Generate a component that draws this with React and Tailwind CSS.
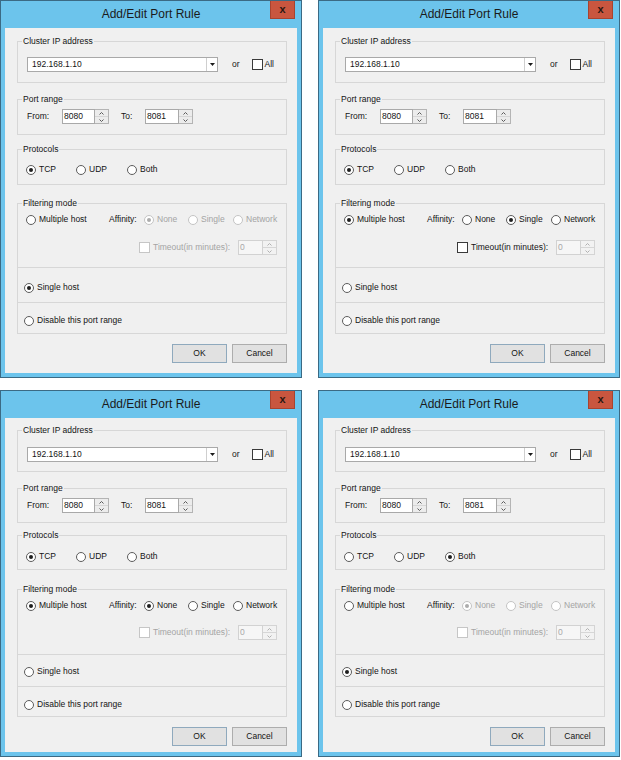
import React from "react";

const TXT = "text-[#141414]";
const DIS = "text-[#a4a4a4]";

function Radio({ label, checked, disabled, className = "" }) {
  return (
    <div className={`flex items-center h-[15px] ${className}`}>
      <span
        className={`w-[10px] h-[10px] shrink-0 rounded-full border bg-white flex items-center justify-center ${
          disabled ? "border-[#c4c4c4]" : "border-[#5c5c5c]"
        }`}
      >
        {checked && (
          <span className={`w-[4px] h-[4px] rounded-full ${disabled ? "bg-[#acacac]" : "bg-[#1e1e1e]"}`} />
        )}
      </span>
      <span className={`ml-[3px] whitespace-nowrap ${disabled ? DIS : TXT}`}>{label}</span>
    </div>
  );
}

function Check({ disabled }) {
  return (
    <span
      className={`w-[11px] h-[11px] shrink-0 border bg-white ${disabled ? "border-[#c6c6c6]" : "border-[#3a3a3a]"}`}
    />
  );
}

function Chevron({ up, disabled }) {
  return (
    <svg width="5" height="3" viewBox="0 0 5 3" className="block">
      <path
        d={up ? "M0.5 2.5 L2.5 0.5 L4.5 2.5" : "M0.5 0.5 L2.5 2.5 L4.5 0.5"}
        fill="none"
        stroke={disabled ? "#b0b0b0" : "#5a5a5a"}
        strokeWidth="1"
      />
    </svg>
  );
}

function Spinner({ value, disabled, w }) {
  return (
    <div className="flex h-[15px]">
      <div
        className={`${w} h-[15px] border pl-[1px] leading-[13px] ${
          disabled ? "border-[#d2d2d2] bg-[#f6f6f6] text-[#a8a8a8]" : "border-[#a9a9a9] bg-white text-[#141414]"
        }`}
      >
        {value}
      </div>
      <div
        className={`w-[14px] h-[15px] flex flex-col border border-l-0 ${
          disabled ? "border-[#d4d4d4] bg-[#f2f2f2]" : "border-[#b4b4b4] bg-[#ececec]"
        }`}
      >
        <div className="flex-1 flex items-center justify-center border-b border-[#d6d6d6]">
          <Chevron up disabled={disabled} />
        </div>
        <div className="flex-1 flex items-center justify-center">
          <Chevron disabled={disabled} />
        </div>
      </div>
    </div>
  );
}

const NORMAL = {
  pt: "pt-[8px]",
  f1h: "h-[47px]",
  f1mt: "mt-[11px]",
  f2mt: "mt-[11px]",
  f2h: "h-[41px]",
  f2rowmt: "mt-[5px]",
  f3mt: "mt-[9px]",
  f3h: "h-[41px]",
  f3rowmt: "mt-[8px]",
  f4mt: "mt-[13px]",
  f4h: "h-[70px]",
  f4rowmt: "mt-[4px]",
  timemt: "mt-[13px]",
  singleh: "h-[35px]",
  singlept: "pt-[12px]",
  dish: "h-[31px]",
  dispt: "pt-[10px]",
  pb: "pb-[10px]",
};

const COMPACT = {
  pt: "pt-[7px]",
  f1h: "h-[47px]",
  f1mt: "mt-[12px]",
  f2mt: "mt-[11px]",
  f2h: "h-[40px]",
  f2rowmt: "mt-[5px]",
  f3mt: "mt-[7px]",
  f3h: "h-[40px]",
  f3rowmt: "mt-[9px]",
  f4mt: "mt-[14px]",
  f4h: "h-[71px]",
  f4rowmt: "mt-[4px]",
  timemt: "mt-[12px]",
  singleh: "h-[32px]",
  singlept: "pt-[9px]",
  dish: "h-[30px]",
  dispt: "pt-[10px]",
  pb: "pb-[6px]",
};

const BOX = "border border-[#d7d7d7]";

function Dialog({ protocol, mode, affinity, timeoutEnabled, compact }) {
  const m = compact ? COMPACT : NORMAL;
  const multi = mode === "multiple";
  const affDisabled = !multi;
  return (
    <div className="w-[302px] border border-[#3b6a84] bg-[#6cc4ec] flex flex-col">
      <div className="h-[27px] grid grid-cols-[1fr_auto_1fr] items-start">
        <div />
        <div className="pt-[6px] text-[12px] leading-[14px] text-[#1b1b1b] whitespace-nowrap">Add/Edit Port Rule</div>
        <div className="flex justify-end pr-[6px]">
          <div className="w-[25px] h-[18px] bg-[#c9563f] border border-[#a8432f] border-t-0 flex items-center justify-center text-[#2b1712] font-bold text-[11px] leading-none pb-[1px]">
            x
          </div>
        </div>
      </div>
      <div className={`mx-[4px] mb-[4px] bg-[#f0f0f0] pl-[12px] pr-[10px] ${m.pt} ${m.pb}`}>
        <fieldset className={`${BOX} ${m.f1h} px-[4px] min-w-0`}>
          <legend className={`px-[1px] leading-[10px] ${TXT}`}>Cluster IP address</legend>
          <div className={`${m.f1mt} flex items-center h-[15px]`}>
            <div className="ml-[5px] w-[191px] h-[15px] bg-white border border-[#a9a9a9] flex">
              <div className={`flex-1 pl-[4px] leading-[13px] ${TXT}`}>192.168.1.10</div>
              <div className="w-[11px] border-l border-[#cfcfcf] flex items-center justify-center">
                <svg width="5" height="3" viewBox="0 0 5 3" className="block">
                  <path d="M0 0 L5 0 L2.5 3 Z" fill="#1a1a1a" />
                </svg>
              </div>
            </div>
            <span className={`ml-[14px] ${TXT}`}>or</span>
            <span className="ml-[12px] flex items-center">
              <Check />
              <span className={`ml-[2px] ${TXT}`}>All</span>
            </span>
          </div>
        </fieldset>

        <fieldset className={`${BOX} ${m.f2h} ${m.f2mt} px-[4px] min-w-0`}>
          <legend className={`px-[1px] leading-[10px] ${TXT}`}>Port range</legend>
          <div className={`${m.f2rowmt} flex items-center h-[15px]`}>
            <span className={`ml-[5px] w-[35px] ${TXT}`}>From:</span>
            <Spinner value="8080" w="w-[33px]" />
            <span className={`ml-[12px] w-[24px] ${TXT}`}>To:</span>
            <Spinner value="8081" w="w-[34px]" />
          </div>
        </fieldset>

        <fieldset className={`${BOX} ${m.f3h} ${m.f3mt} px-[4px] min-w-0`}>
          <legend className={`px-[1px] leading-[10px] ${TXT}`}>Protocols</legend>
          <div className={`${m.f3rowmt} flex items-center h-[15px] pl-[4px]`}>
            <Radio label="TCP" checked={protocol === "TCP"} className="w-[50px]" />
            <Radio label="UDP" checked={protocol === "UDP"} className="w-[51px]" />
            <Radio label="Both" checked={protocol === "Both"} />
          </div>
        </fieldset>

        <fieldset className={`${BOX} ${m.f4h} ${m.f4mt} px-[4px] min-w-0`}>
          <legend className={`px-[1px] leading-[10px] ${TXT}`}>Filtering mode</legend>
          <div className={`${m.f4rowmt} flex items-center h-[15px] pl-[4px]`}>
            <Radio label="Multiple host" checked={multi} className="w-[83px]" />
            <span className={`w-[35px] ${TXT}`}>Affinity:</span>
            <Radio label="None" checked={affinity === "None"} disabled={affDisabled} className="w-[44px]" />
            <Radio label="Single" checked={affinity === "Single"} disabled={affDisabled} className="w-[45px]" />
            <Radio label="Network" checked={affinity === "Network"} disabled={affDisabled} />
          </div>
          <div className={`${m.timemt} flex items-center h-[15px] pl-[117px]`}>
            <div className="w-[99px] flex items-center">
              <Check disabled={!timeoutEnabled} />
              <span className={`ml-[3px] whitespace-nowrap ${timeoutEnabled ? TXT : DIS}`}>Timeout(in minutes):</span>
            </div>
            <Spinner value="0" w="w-[25px]" disabled />
          </div>
        </fieldset>

        <div className={`${m.singleh} ${m.singlept} border border-t-0 border-[#d7d7d7] pl-[6px]`}>
          <Radio label="Single host" checked={mode === "single"} />
        </div>
        <div className={`${m.dish} ${m.dispt} border border-t-0 border-[#d7d7d7] pl-[6px]`}>
          <Radio label="Disable this port range" checked={mode === "disable"} />
        </div>

        <div className="mt-[10px] flex justify-end gap-[5px]">
          <div className={`w-[55px] h-[19px] bg-[#e1e1e1] border border-[#8fa9bd] flex items-center justify-center ${TXT}`}>
            OK
          </div>
          <div className={`w-[55px] h-[19px] bg-[#e1e1e1] border border-[#adadad] flex items-center justify-center ${TXT}`}>
            Cancel
          </div>
        </div>
      </div>
    </div>
  );
}

export default function App() {
  return (
    <div className="w-[621px] h-[760px] bg-white overflow-hidden font-['Liberation_Sans',Arial,sans-serif] text-[8.5px]">
      <div className="grid grid-cols-[302px_302px] gap-x-[16px] gap-y-[12px] items-start">
        <Dialog protocol="TCP" mode="single" affinity="None" timeoutEnabled={false} />
        <Dialog protocol="TCP" mode="multiple" affinity="Single" timeoutEnabled />
        <Dialog protocol="TCP" mode="multiple" affinity="None" timeoutEnabled={false} compact />
        <Dialog protocol="Both" mode="single" affinity="None" timeoutEnabled={false} compact />
      </div>
    </div>
  );
}
